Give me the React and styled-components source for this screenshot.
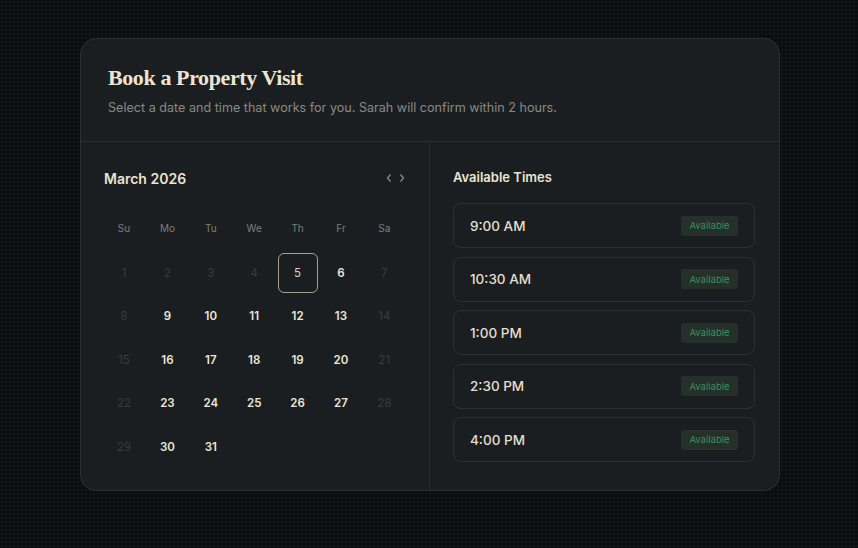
import React from 'react';
import styled, { createGlobalStyle } from 'styled-components';

const GlobalStyle = createGlobalStyle`
  html, body {
    margin: 0;
    padding: 0;
    background-color: #0c0d0f;
    background-image: radial-gradient(rgba(255, 255, 255, 0.035) 1px, transparent 1px);
    background-size: 4px 4px;
    font-family: Inter, "Noto Sans", sans-serif;
    min-height: 548px;
  }
`;

const Page = styled.div`
  display: flex;
  justify-content: center;
  padding: 38px 0 0 2px;
`;

const Card = styled.div`
  width: 700px;
  box-sizing: border-box;
  background: #1b1e20;
  border: 1px solid #2b302f;
  border-radius: 16px;
  overflow: hidden;
`;

const Header = styled.div`
  padding: 25px 27px 24px;
  border-bottom: 1px solid #2b302f;
`;

const Title = styled.h1`
  margin: 0;
  font-family: "Liberation Serif", "DejaVu Serif", serif;
  font-weight: 700;
  font-size: 22px;
  line-height: 28px;
  letter-spacing: -0.4px;
  color: #ede5d2;
`;

const Subtitle = styled.p`
  margin: 7px 0 0;
  font-size: 12.6px;
  line-height: 18px;
  color: #878a87;
`;

const Body = styled.div`
  display: grid;
  grid-template-columns: 349px 1fr;
`;

const CalendarPane = styled.div`
  padding: 24px 24px 23px 23px;
  border-right: 1px solid #2b302f;
`;

const MonthBar = styled.div`
  display: flex;
  justify-content: space-between;
  align-items: center;
  height: 24px;
  margin-bottom: 28px;
`;

const MonthTitle = styled.div`
  font-size: 14px;
  font-weight: 600;
  color: #ece4d2;
`;

const Arrows = styled.div`
  display: flex;
  gap: 5px;
  margin-right: -1px;
`;

const Arrow = styled.span`
  width: 8px;
  display: flex;
  justify-content: center;
`;

const Grid = styled.div`
  display: grid;
  grid-template-columns: repeat(7, 40px);
  column-gap: 3.4px;
  row-gap: 3.6px;
`;

const WeekDay = styled.div`
  height: 20px;
  margin-bottom: 11px;
  display: flex;
  align-items: center;
  justify-content: center;
  font-size: 10px;
  color: #7b7e7b;
`;

const Day = styled.div`
  height: 40px;
  box-sizing: border-box;
  display: flex;
  align-items: center;
  justify-content: center;
  font-size: 11.5px;
  font-weight: ${p => (p.$muted || p.$selected ? 400 : 600)};
  color: ${p => (p.$muted ? '#363c3a' : p.$selected ? '#d9d3c4' : '#ece6d6')};
  border: 1px solid ${p => (p.$selected ? '#a59f8d' : 'transparent')};
  border-radius: 6px;
`;

const TimesPane = styled.div`
  padding: 24px 24px 28px 23px;
`;

const TimesTitle = styled.div`
  font-size: 13px;
  font-weight: 600;
  line-height: 22px;
  color: #ece4d2;
  margin-bottom: 15px;
`;

const Slots = styled.div`
  display: flex;
  flex-direction: column;
  gap: 8.5px;
`;

const Slot = styled.div`
  height: 45px;
  box-sizing: border-box;
  display: flex;
  align-items: center;
  justify-content: space-between;
  padding: 0 16px;
  border: 1px solid #2d3230;
  border-radius: 8px;
`;

const Time = styled.span`
  font-size: 13.5px;
  font-weight: 500;
  color: #e4dece;
`;

const Badge = styled.span`
  height: 20px;
  width: 57px;
  display: flex;
  align-items: center;
  justify-content: center;
  background: #243029;
  border-radius: 3px;
  font-size: 9.5px;
  color: #3e8f5e;
`;

const weekDays = ['Su', 'Mo', 'Tu', 'We', 'Th', 'Fr', 'Sa'];
const times = ['9:00 AM', '10:30 AM', '1:00 PM', '2:30 PM', '4:00 PM'];

const App = () => {
  const days = [];
  for (let d = 1; d <= 31; d++) {
    const dow = (d - 1) % 7;
    const muted = d < 5 || dow === 0 || dow === 6;
    days.push({ d, muted, selected: d === 5 });
  }

  return (
    <>
      <GlobalStyle />
      <Page>
        <Card>
          <Header>
            <Title>Book a Property Visit</Title>
            <Subtitle>Select a date and time that works for you. Sarah will confirm within 2 hours.</Subtitle>
          </Header>
          <Body>
            <CalendarPane>
              <MonthBar>
                <MonthTitle>March 2026</MonthTitle>
                <Arrows>
                  <Arrow>
                    <svg width="6" height="10" viewBox="0 0 6 10" fill="none">
                      <path d="M4.5 1.5L1.5 5l3 3.5" stroke="#8a8d8a" strokeWidth="1.2" />
                    </svg>
                  </Arrow>
                  <Arrow>
                    <svg width="6" height="10" viewBox="0 0 6 10" fill="none">
                      <path d="M1.5 1.5L4.5 5l-3 3.5" stroke="#8a8d8a" strokeWidth="1.2" />
                    </svg>
                  </Arrow>
                </Arrows>
              </MonthBar>
              <Grid>
                {weekDays.map(w => <WeekDay key={w}>{w}</WeekDay>)}
                {days.map(day => (
                  <Day key={day.d} $muted={day.muted} $selected={day.selected}>{day.d}</Day>
                ))}
              </Grid>
            </CalendarPane>
            <TimesPane>
              <TimesTitle>Available Times</TimesTitle>
              <Slots>
                {times.map(t => (
                  <Slot key={t}>
                    <Time>{t}</Time>
                    <Badge>Available</Badge>
                  </Slot>
                ))}
              </Slots>
            </TimesPane>
          </Body>
        </Card>
      </Page>
    </>
  );
};

export default App;
